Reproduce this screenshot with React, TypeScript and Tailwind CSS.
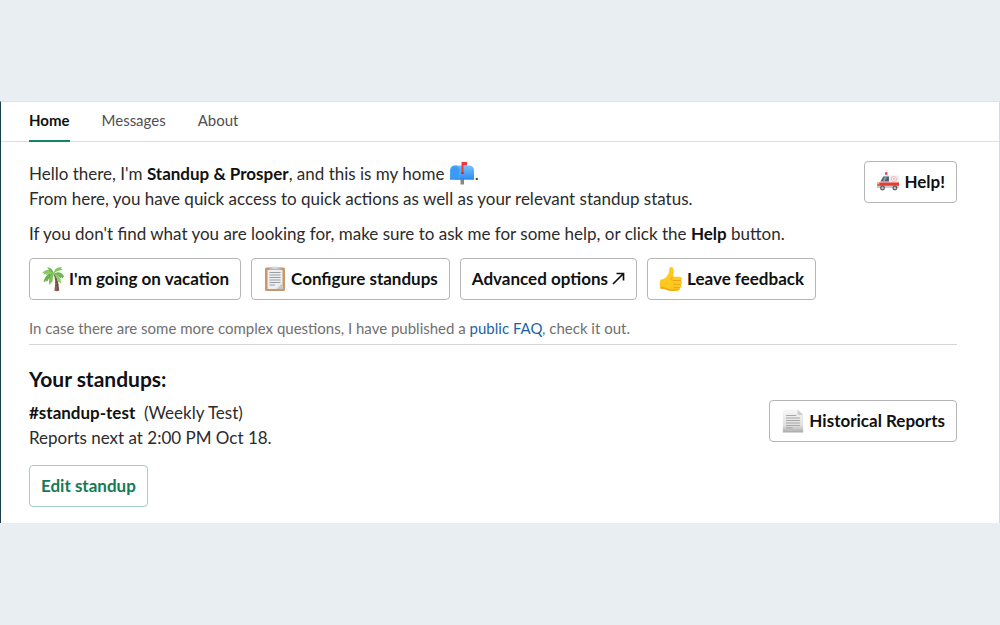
import { clsx } from "clsx";
import type { ReactNode } from "react";

const TABS = ["Home", "Messages", "About"];

function MailboxIcon() {
  return (
    <svg
      viewBox="0 0 26 24"
      className="inline-block h-6 w-[26px] align-[-5px]"
      aria-hidden="true"
    >
      <defs>
        <linearGradient id="mailbox" x1="0" y1="0" x2="0" y2="1">
          <stop offset="0" stopColor="#74c2ff" />
          <stop offset="1" stopColor="#2f8df0" />
        </linearGradient>
      </defs>
      <rect x="11.5" y="17" width="3.5" height="6.5" fill="#8d8580" />
      <path d="M6 4.5h14.5c3 0 4.500 2.200 4.500 5v9H6z" fill="url(#mailbox)" />
      <path d="M1 9.500c0-3 2-5 5-5s5 2 5 5v9H1z" fill="#4aa7fb" />
      <path d="M2 9.700c0-2.500 1.600-4 4-4s4 1.500 4 4v7.800H2z" fill="#3a9bf6" />
      <path d="M1 18h24" stroke="#2f86e0" strokeWidth="1" />
      <path d="M12.500 1H18v3.500h-3.500v8h-2z" fill="#ee3b38" />
      <circle cx="13.500" cy="12" r="1.300" fill="#c9312f" />
    </svg>
  );
}

function AmbulanceIcon() {
  return (
    <svg viewBox="0 0 26 24" className="h-[22px] w-6" aria-hidden="true">
      <path d="M9.800 4V2.500a1.300 1.300 0 0 1 2.600 0V4z" fill="#ef3b3b" />
      <path d="M7.500 5H25v13.500H1.200v-5.700l3-1z" fill="#e9edf0" />
      <path d="M8 6h6v5.500H4.800z" fill="#49606f" />
      <path d="M9.500 6.500h2l-2 4.500h-2z" fill="#89a4b3" />
      <circle cx="19.500" cy="8.800" r="2.700" fill="#fff" stroke="#f3aaa8" />
      <path d="M19.500 7.500v2.600M18.200 8.800h2.600" stroke="#f3a3a0" />
      <path d="M1.200 12.500H25v3.700H1.200z" fill="#e93b32" />
      <path d="M1 16.200h24v2.300H1z" fill="#c5cbd0" />
      <path d="M1.200 12.500h2.300v2H1.200z" fill="#ffc45c" />
      <circle cx="7" cy="18.500" r="2.700" fill="#5b5b60" />
      <circle cx="7" cy="18.500" r="1.300" fill="#c6c8cb" />
      <circle cx="20.500" cy="18.500" r="2.700" fill="#5b5b60" />
      <circle cx="20.500" cy="18.500" r="1.300" fill="#c6c8cb" />
    </svg>
  );
}

function PalmIcon() {
  return (
    <svg viewBox="0 0 24 26" className="h-[26px] w-6" aria-hidden="true">
      <path
        d="M12.500 8c2 4.500 2.200 10 .8 16.500 1.500.9 3.700.9 5 0C17.500 18 16.500 12 14.500 7.500z"
        fill="#8a6253"
      />
      <path
        d="M14.500 10c1.700 4 2.300 9 2.500 14.500M14 13.500l2.500-.8M14.300 16.500l2.900-.8M14.300 19.500l3.200-.8"
        stroke="#65443b"
        strokeWidth=".8"
        fill="none"
      />
      <path
        d="M13 7.500C9 6 4.500 8.500 2.500 16c1 0 2-.8 2.600-1.800l.3 1.600c1.500-.8 2-2 2.200-3.300l.8 1.200C10 12 11.500 10 13 7.500z"
        fill="#6bb04e"
      />
      <path
        d="M12.800 7.500C9 8.500 7.300 13 8.300 19c1.200-.8 1.700-1.800 1.800-3l.9.800c1-2 .7-4 1-5.500.3-1.300.5-2.500.8-3.800z"
        fill="#7fc25a"
      />
      <path
        d="M13 7.800C11 3 5.500 1.800.8 7.200l2.300-.2-.8 1.700 2.600-.9-.3 1.600C7.500 7.500 10 7 13 7.800z"
        fill="#8bcb65"
      />
      <path
        d="M13 7.500C11.800 4 9.500 1.500 6 1.300l1 1.300C9 5 11 6.500 13 7.500z"
        fill="#6bb04e"
      />
      <path
        d="M12.800 7.800C13 3.500 16.500.5 21 1.500l-1.300 1.200 2.100.2-1.800 1.300C17 4.200 15 5.500 12.800 7.800z"
        fill="#82c55c"
      />
      <path
        d="M12.800 7.800c4-3 8.500-1.500 10.700 3.500l-1.700-.5.400 1.700-2.200-1.200-.1 1.500C17.500 10 15.500 8.500 12.800 7.800z"
        fill="#70b653"
      />
      <path
        d="M13 7.500c4 1 7 4.500 7.300 10-1.200-.3-1.800-1-2.200-2l-.8 1C16 14 15 10.500 13 7.500z"
        fill="#90ce69"
      />
    </svg>
  );
}

function ClipboardIcon() {
  return (
    <svg viewBox="0 0 22 26" className="h-[26px] w-6" aria-hidden="true">
      <rect x="1" y="1.500" width="20" height="23.500" rx="1.500" fill="#c9976b" />
      <path d="M3.500 4h15v19h-15z" fill="#eceef0" />
      <path d="M18.500 17v6h-6z" fill="#c7cacd" />
      <path d="M5.500 1.500h11V4h-11z" fill="#b9bcbf" />
      <path d="M8.500.500h5v2h-5z" fill="#dcdfe1" />
      <path
        d="M5.500 6.500h11M5.500 9h11M5.500 11.500h11M5.500 14h11M5.500 16.500h11M5.500 19h5.500"
        stroke="#9a9fa3"
        strokeWidth="1.200"
      />
    </svg>
  );
}

function ThumbsUpIcon() {
  return (
    <svg viewBox="0 0 24 26" className="h-[26px] w-6" aria-hidden="true">
      <path
        d="M1.500 13.500c2.500-.2 4.500-1 6-2.800C9.300 8.500 10.500 6.500 10.300 3c-.1-2.200 3-2.700 3.900-.5 1 2.500.6 5.500-.4 8.300h6.700c2.800 0 3.200 3.200 1.300 4 1.700.8 1.500 3.200-.1 3.700 1.100 1 .7 3-.7 3.300.6 1.500-.4 3-2.400 3-5 .4-9 .2-12-1.200-1.600-.6-3-.6-5-.7-1-2.400-1-7 -.1-9.400z"
        fill="#ffc81f"
      />
      <path
        d="M14 14.500h7.700M14.500 18.300h7M14.800 21.700h5.800M13.800 10.800c-1.300.3-2.300 1.500-1.800 3"
        stroke="#eba017"
        strokeWidth=".9"
        fill="none"
        strokeLinecap="round"
      />
      <path
        d="M1.500 20.500c3 0 4.500 1.500 8 2.300 3 .6 7 .5 10 .2-.5 1-1 1.500-2 1.600-5 .5-8 .1-11-1.300-1.500-.5-3-.5-4.800-.5z"
        fill="#f3a71a"
      />
    </svg>
  );
}

function PageIcon() {
  return (
    <svg viewBox="0 0 22 26" className="h-6 w-6" aria-hidden="true">
      <defs>
        <linearGradient id="page" x1="0" y1="0" x2="0" y2="1">
          <stop offset="0" stopColor="#f7f7f7" />
          <stop offset=".7" stopColor="#dfdfdf" />
          <stop offset="1" stopColor="#a9a9a9" />
        </linearGradient>
      </defs>
      <path d="M0 .5h16l6 6v19H0z" fill="url(#page)" />
      <path d="M16 .5v6h6z" fill="#cdcdcd" />
      <path
        d="M3.500 7h11M3.500 9.700h15M3.500 12.400h15M3.500 15.100h15M3.500 17.800h15M3.500 20.500h7"
        stroke="#a8a8a8"
        strokeWidth="1.200"
      />
    </svg>
  );
}

function ArrowIcon() {
  return (
    <svg
      viewBox="0 0 13 13"
      className="size-[13px]"
      fill="none"
      stroke="currentColor"
      strokeWidth="1.700"
      aria-hidden="true"
    >
      <path d="M1 12 11.500 1.500M4.500 1.500h7v7" />
    </svg>
  );
}

function Button({
  children,
  primary = false,
}: {
  children: ReactNode;
  primary?: boolean;
}) {
  return (
    <button
      type="button"
      className={clsx(
        "flex h-[42px] shrink-0 items-center gap-1 whitespace-nowrap rounded border px-[11px] font-bold",
        primary
          ? "border-[#a3d0be] text-[#147a56]"
          : "border-[#b5b5b5] text-[#111]",
      )}
    >
      {children}
    </button>
  );
}

export default function App() {
  return (
    <div className="flex min-h-screen flex-col justify-center bg-[#e9eef2] pb-0.5 font-['Lato',sans-serif] text-[17px] leading-[25px] text-[#2c2b2c]">
      <main className="border-x border-t border-t-[#dfe2e4] border-r-[#cfdde3] border-l-[#183e4e] bg-white">
        <nav className="flex h-10 gap-8 border-b border-[#dedede] px-7 text-[15px]">
          {TABS.map((tab, i) => (
            <a
              key={tab}
              href={`#${tab.toLowerCase()}`}
              className={clsx(
                "-mb-px flex h-10 items-center border-b-2",
                i === 0
                  ? "border-[#148567] font-bold text-[#111]"
                  : "border-transparent text-[#505050]",
              )}
            >
              {tab}
            </a>
          ))}
        </nav>

        <div className="pt-[19px] pr-[42px] pb-4 pl-7">
          <section className="border-b border-[#d5d5d5] pb-1">
            <div className="flex items-start justify-between">
              <div>
                <p>
                  Hello there, I'm{" "}
                  <b className="text-[#111]">Standup &amp; Prosper</b>, and this
                  is my home <MailboxIcon />.
                  <br />
                  From here, you have quick access to quick actions as well as
                  your relevant standup status.
                </p>
                <p className="mt-2.5">
                  If you don't find what you are looking for, make sure to ask
                  me for some help, or click the{" "}
                  <b className="text-[#111]">Help</b> button.
                </p>
              </div>
              <Button>
                <AmbulanceIcon />
                Help!
              </Button>
            </div>

            <div className="mt-3 flex flex-wrap gap-2.5">
              <Button>
                <PalmIcon />
                I'm going on vacation
              </Button>
              <Button>
                <ClipboardIcon />
                Configure standups
              </Button>
              <Button>
                Advanced options
                <ArrowIcon />
              </Button>
              <Button>
                <ThumbsUpIcon />
                Leave feedback
              </Button>
            </div>

            <p className="mt-4 text-[15px] leading-6 text-[#717071]">
              In case there are some more complex questions, I have published a{" "}
              <a href="#faq" className="text-[#1d64a3]">
                public FAQ
              </a>
              , check it out.
            </p>
          </section>

          <section className="pt-[21px]">
            <h2 className="text-[21px] leading-[26px] font-bold text-[#111]">
              Your standups:
            </h2>
            <div className="mt-2 flex items-start justify-between">
              <p>
                <b className="text-[#111]">#standup-test</b>&nbsp; (Weekly Test)
                <br />
                Reports next at 2:00 PM Oct 18.
              </p>
              <Button>
                <PageIcon />
                Historical Reports
              </Button>
            </div>
            <div className="mt-[15px] flex">
              <Button primary>Edit standup</Button>
            </div>
          </section>
        </div>
      </main>
    </div>
  );
}
